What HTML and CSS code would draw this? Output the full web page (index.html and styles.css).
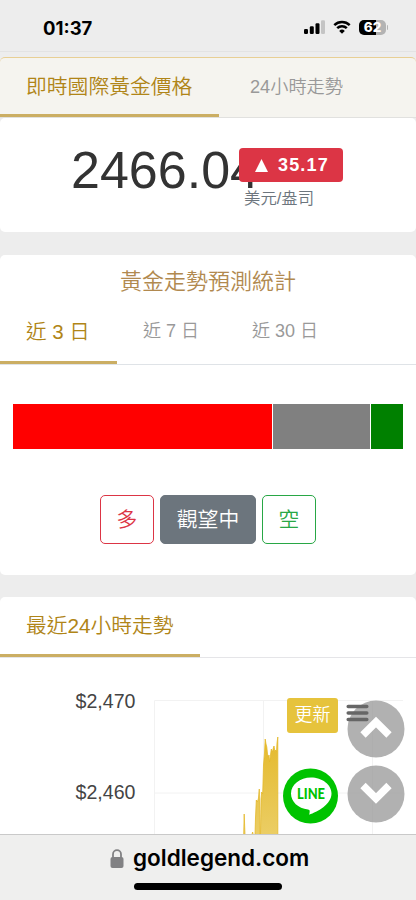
FILE: index.html
```html
<!DOCTYPE html>
<html lang="zh-Hant">
<head>
<meta charset="utf-8">
<meta name="viewport" content="width=device-width, initial-scale=1">
<title>即時國際黃金價格</title>
<link rel="stylesheet" href="styles.css">
</head>
<body>
<header class="status">
  <span class="clock">01:37</span>
  <div class="status-icons">
    <svg class="signal" width="22" height="14" viewBox="0 0 22 14">
      <rect x="0" y="9" width="4" height="5" rx="1.2"/>
      <rect x="5.8" y="6.3" width="4" height="7.7" rx="1.2"/>
      <rect x="11.5" y="3.2" width="4" height="10.8" rx="1.2"/>
      <rect x="17" y="0.2" width="4" height="13.8" rx="1.2" fill="#c4c4c4"/>
    </svg>
    <svg class="wifi" width="18" height="14" viewBox="0 0 18 14">
      <path d="M1.3 5.1a11.2 11.2 0 0 1 15.4 0M4.2 8.2a7 7 0 0 1 9.6 0" fill="none" stroke="#000" stroke-width="2.5"/>
      <path d="M9 13.7l-2.8-2.8a4 4 0 0 1 5.6 0z"/>
    </svg>
    <div class="battery"><span>62</span></div>
  </div>
</header>

<main>
  <nav class="top-tabs">
    <a class="tab active">即時國際黃金價格</a>
    <a class="tab">24小時走勢</a>
  </nav>

  <section class="card price-card">
    <span class="price">2466.04</span>
    <div class="change">
      <span class="badge"><svg width="13" height="13" viewBox="0 0 13 13"><path d="M6.5 0L13 13H0z" fill="#fff"/></svg>35.17</span>
      <span class="unit">美元/盎司</span>
    </div>
  </section>

  <section class="card forecast">
    <h2>黃金走勢預測統計</h2>
    <nav class="day-tabs">
      <a class="tab active">近 3 日</a>
      <a class="tab">近 7 日</a>
      <a class="tab">近 30 日</a>
    </nav>
    <div class="bar">
      <i class="bull"></i><i class="wait"></i><i class="bear"></i>
    </div>
    <div class="votes">
      <button class="vote long">多</button>
      <button class="vote hold">觀望中</button>
      <button class="vote short">空</button>
    </div>
  </section>

  <section class="card trend">
    <nav class="trend-tabs"><a class="tab active">最近24小時走勢</a></nav>
    <svg class="chart" width="416" height="177" viewBox="0 658 416 177">
      <defs>
        <linearGradient id="gold" x1="0" y1="737" x2="0" y2="890" gradientUnits="userSpaceOnUse">
          <stop offset="0" stop-color="#e4b92b"/><stop offset="1" stop-color="#efd985"/>
        </linearGradient>
      </defs>
      <path d="M154.5 835V700.500H403M154 793H403M263.500 700V835M372.500 700V835" fill="none" stroke="#f2f2f2"/>
      <g class="axis"><text x="75.5" y="708">$2,470</text><text x="75.5" y="799">$2,460</text></g>
      <path d="M243.700 835L244.200 814L245 835ZM251.800 835L252.600 832L253.300 835ZM255 835L255.500 818L256.300 800L257.200 802L258 800L258.500 798L259.300 789L260 835L260.500 835L261 799L261.700 792L262.700 794L263.500 765L264.500 753L265.200 739L266 744L266.800 747L267.500 754L268.300 757L269 755L269.500 762L270.500 755L271.300 749L272.500 752L273.300 748L274 746L275 752L275.700 750L276.500 752L277 743L277.800 737V835Z" fill="url(#gold)" stroke="#e4b92b" stroke-width=".8"/>
    </svg>
    <button class="refresh">更新</button>
    <div class="line-logo">
      <svg width="56" height="56" viewBox="0 0 56 56">
        <circle cx="27.5" cy="28" r="27.500" fill="#00c300"/>
        <path d="M28 9.500c-11 0-20 7-20 16 0 8 7 15 17 16 2 .4 2 1.500 1.200 5.200 8-3 22.300-10 22.300-21.200 0-9-9.500-16-20.500-16z" fill="#fff"/>
        <text x="14" y="31.300" textLength="28" lengthAdjust="spacingAndGlyphs">LINE</text>
      </svg>
    </div>
    <svg class="scroll up" width="58" height="58" viewBox="0 0 58 58"><circle cx="29" cy="29" r="28.500"/><path d="M16 35L29 22L42 35"/></svg>
    <svg class="scroll down" width="58" height="58" viewBox="0 0 58 58"><circle cx="29" cy="29" r="28.500"/><path d="M16 20.500L29 33.500L42 20.500"/></svg>
    <svg class="menu" width="24" height="18" viewBox="0 0 24 18"><path d="M2.200 2.500H20.800M2.200 9H20.800M2.200 15.500H20.800"/></svg>
  </section>
</main>

<footer class="address">
  <div class="url">
    <svg width="14" height="19" viewBox="0 0 14 19"><path d="M3 9V5.200a4 4 0 0 1 8 0V9" fill="none" stroke="#818183" stroke-width="1.800"/><rect x=".5" y="8" width="13" height="11" rx="2" fill="#818183"/></svg>
    <span>goldlegend.com</span>
  </div>
  <div class="home"></div>
</footer>
</body>
</html>
```
FILE: styles.css
```css
* { box-sizing: border-box; }
body {
  margin: 0;
  width: 416px;
  height: 900px;
  overflow: hidden;
  display: flex;
  flex-direction: column;
  background: #ededed;
  color: #333;
  font-family: "Liberation Sans", "Noto Sans CJK TC", sans-serif;
  font-weight: 350;
}
svg { display: block; }
.status {
  flex: none;
  height: 52px;
  border-bottom: 1px solid #e3e3e3;
  display: flex;
  justify-content: space-between;
  padding: 0 30px 0 43px;
}
.clock {
  padding-top: 16px;
  font: 700 18.500px/24px Inter, sans-serif;
  color: #000;
}
.status-icons { display: flex; padding-top: 20px; }
.wifi { margin-left: 7px; }
.battery {
  width: 27px;
  height: 15px;
  margin-left: 8px;
  border-radius: 5px;
  background: linear-gradient(90deg, #000 62%, #b3b3b3 62%);
  color: #fff;
  font: 800 13.500px/15px Inter, sans-serif;
  text-align: center;
  position: relative;
}
.battery::after {
  content: "";
  position: absolute;
  right: -2px;
  top: 5px;
  width: 1.500px;
  height: 5px;
  border-radius: 0 2px 2px 0;
  background: #b3b3b3;
}
main { flex: 1; min-height: 0; padding-top: 5px; overflow: hidden; }
.tab { color: #999; font-size: 18px; white-space: nowrap; }
.tab.active { color: #b08517; border-bottom: 3px solid #cbae63; }
.top-tabs {
  display: flex;
  height: 61px;
  background: #f5f4ef;
  border: 1px solid #e8cf94;
  border-bottom-color: #e1e1df;
  border-radius: 5px 5px 0 0;
  border-left: 0;
  border-right: 0;
}
.top-tabs .tab { line-height: 59px; padding-left: 31px; font-size: 18.200px; }
.top-tabs .tab.active { width: 219px; font-size: 20.800px; line-height: 57px; padding-left: 26px; }
.card { background: #fff; border-radius: 5px; }
.price-card { height: 114px; display: flex; padding: 22px 0 0 71px; }
.price {
  width: 168px;
  font-size: 52px;
  line-height: 60px;
  white-space: nowrap;
}
.change { position: relative; padding-top: 8px; }
.badge {
  width: 104px;
  height: 34px;
  border-radius: 4px;
  background: #dc3545;
  color: #fff;
  font-size: 18px;
  font-weight: 700;
  letter-spacing: 1.150px;
  display: flex;
  align-items: center;
  padding-left: 16px;
  gap: 10px;
}
.unit { display: block; margin-left: 5px; font-size: 16.400px; line-height: 33px; color: #6c757d; }
.forecast { margin-top: 23px; height: 320px; }
h2 {
  margin: 0;
  padding-top: 10px;
  font-size: 22px;
  line-height: 33px;
  font-weight: 350;
  text-align: center;
  color: #b1894f;
}
.day-tabs { display: flex; height: 67px; border-bottom: 1px solid #dfe3e7; }
.day-tabs .tab { line-height: 66px; padding-left: 26px; width: 109px; }
.day-tabs .tab.active { width: 117px; font-size: 20.500px; line-height: 67px; }
.bar { display: flex; gap: 1px; height: 45px; margin: 39px 13px 0; }
.bull { width: 259px; background: #f00; }
.wait { width: 96.500px; background: gray; }
.bear { flex: 1; background: green; }
.votes { display: flex; justify-content: center; gap: 6px; margin-top: 46px; }
.vote {
  width: 54px;
  height: 49px;
  padding: 0 0 4px;
  border: 1px solid;
  border-radius: 5px;
  background: none;
  font: inherit;
  font-size: 20.800px;
}
.long { color: #dc3545; }
.hold { width: 96px; background: #6c757d; border-color: #6c757d; color: #fff; }
.short { color: #28a745; }
.trend { margin-top: 22px; position: relative; height: 260px; }
.trend-tabs { display: flex; height: 61px; border-bottom: 1px solid #e5e5e8; }
.trend-tabs .tab { width: 200px; font-size: 20.750px; line-height: 57px; padding-left: 26px; }
.axis text { font-size: 19.600px; fill: #444; }
.refresh {
  position: absolute;
  left: 287px;
  top: 100.500px;
  width: 51px;
  height: 35px;
  padding: 0 0 4px;
  border: 0;
  border-radius: 3px;
  background: #e6c33c;
  color: #fff;
  font: inherit;
  font-size: 18px;
}
.line-logo { position: absolute; left: 283px; top: 171px; }
.line-logo text { font: 900 15.500px Lato, sans-serif; fill: #00c300; }
.scroll { position: absolute; left: 347px; }
.scroll circle { fill: #999; fill-opacity: .76; }
.scroll path { fill: none; stroke: #fff; stroke-width: 7.500; }
.up { top: 102.500px; }
.down { top: 167.500px; }
.menu { position: absolute; left: 346px; top: 106.500px; }
.menu path { stroke: #666; stroke-width: 3.500; stroke-linecap: round; }
.address {
  flex: none;
  position: relative;
  height: 66px;
  background: #efefee;
  border-top: 1px solid #c9c9c9;
}
.url { display: flex; padding: 8px 0 0 110px; height: 48px; gap: 9px; }
.url svg { margin-top: 6px; }
.url span { font: 600 22.500px/30px Inter, sans-serif; color: #000; letter-spacing: 0; }
.home { width: 148px; height: 7px; margin-left: 134px; background: #000; border-radius: 4px; }
```
